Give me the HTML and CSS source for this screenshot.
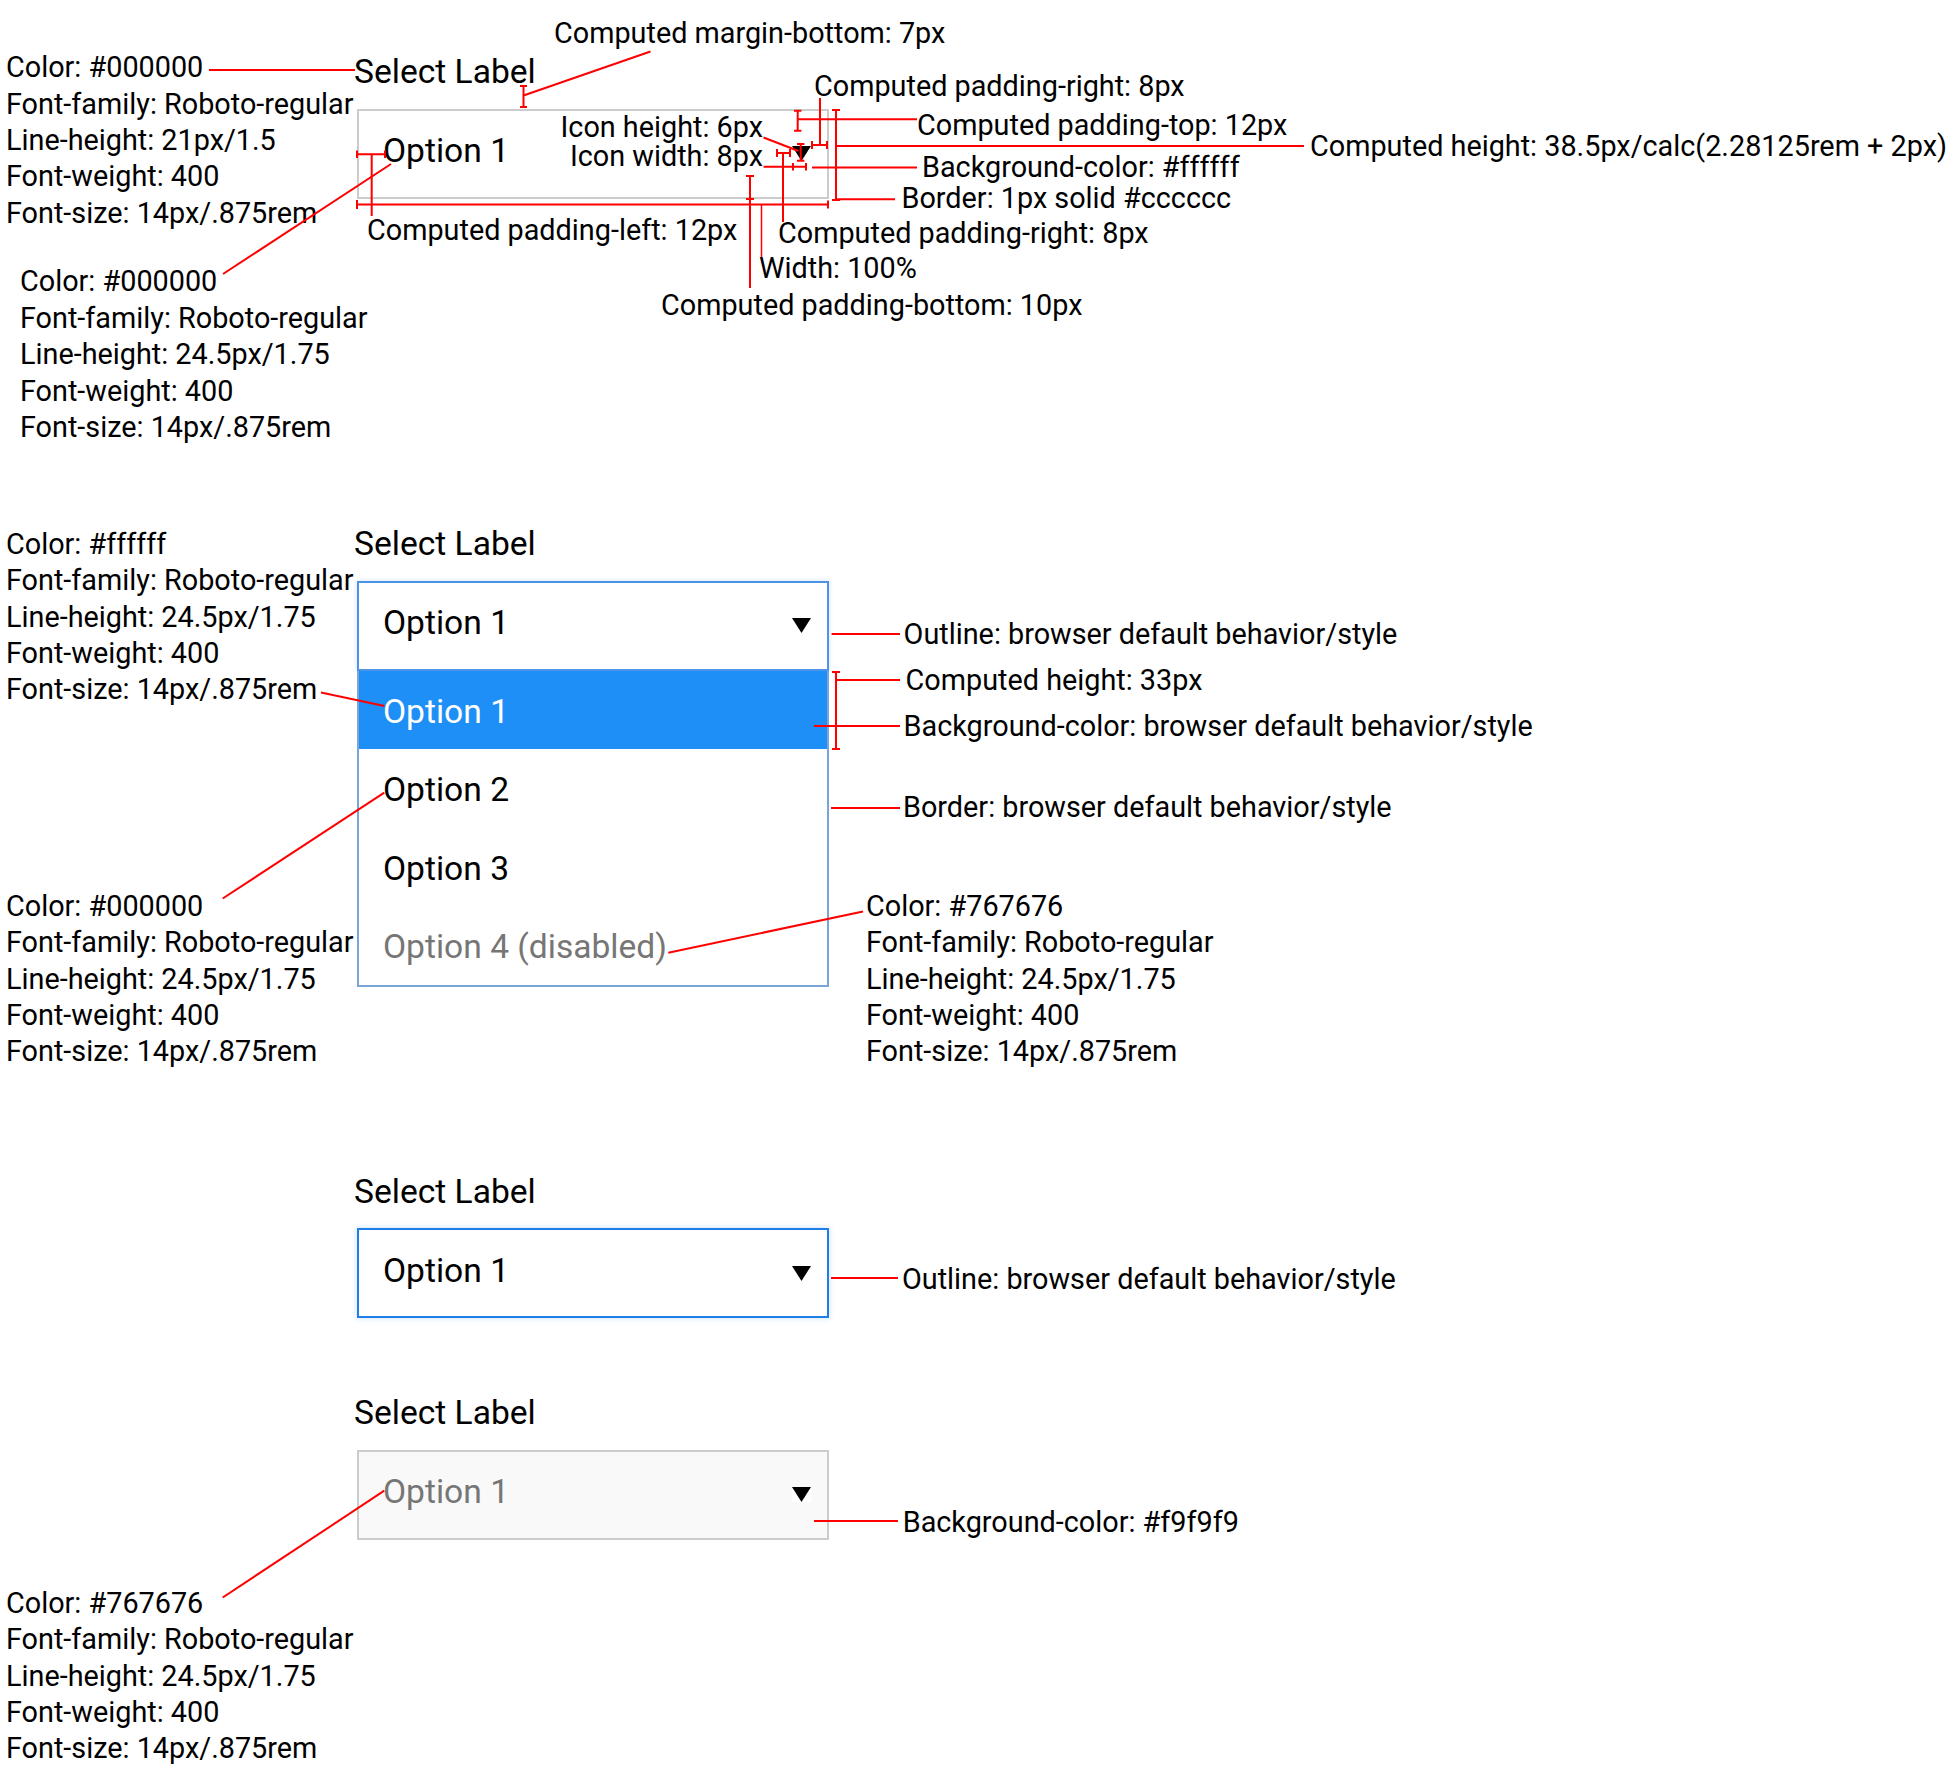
FILE: index.html
```html
<!DOCTYPE html>
<html lang="en">
<head>
<meta charset="utf-8">
<title>Select – redline spec</title>
<link rel="stylesheet" href="styles.css">
</head>
<body>
<div class="page">
  <div class="components">
    <section class="field f1">
      <div class="label">Select Label</div>
      <div class="select s-default"><span class="value">Option 1</span><svg class="caret" viewBox="0 0 19 15"><polygon points="0,0 19,0 9.5,15"/></svg></div>
    </section>
    <section class="field f2">
      <div class="label">Select Label</div>
      <div class="select s-open"><span class="value">Option 1</span><svg class="caret" viewBox="0 0 19 15"><polygon points="0,0 19,0 9.5,15"/></svg></div>
      <ul class="listbox">
        <li class="opt selected">Option 1</li>
        <li class="opt">Option 2</li>
        <li class="opt">Option 3</li>
        <li class="opt disabled">Option 4 (disabled)</li>
      </ul>
    </section>
    <section class="field f3">
      <div class="label">Select Label</div>
      <div class="select s-focus"><span class="value">Option 1</span><svg class="caret" viewBox="0 0 19 15"><polygon points="0,0 19,0 9.5,15"/></svg></div>
    </section>
    <section class="field f4">
      <div class="label">Select Label</div>
      <div class="select s-disabled"><span class="value">Option 1</span><svg class="caret" viewBox="0 0 19 15"><polygon points="0,0 19,0 9.5,15"/></svg></div>
    </section>
  </div>

  <div class="note block n-a">Color: #000000<br>Font-family: Roboto-regular<br>Line-height: 21px/1.5<br>Font-weight: 400<br>Font-size: 14px/.875rem</div>
  <div class="note block n-b">Color: #000000<br>Font-family: Roboto-regular<br>Line-height: 24.5px/1.75<br>Font-weight: 400<br>Font-size: 14px/.875rem</div>
  <div class="note block n-c">Color: #ffffff<br>Font-family: Roboto-regular<br>Line-height: 24.5px/1.75<br>Font-weight: 400<br>Font-size: 14px/.875rem</div>
  <div class="note block n-d">Color: #000000<br>Font-family: Roboto-regular<br>Line-height: 24.5px/1.75<br>Font-weight: 400<br>Font-size: 14px/.875rem</div>
  <div class="note block n-e">Color: #767676<br>Font-family: Roboto-regular<br>Line-height: 24.5px/1.75<br>Font-weight: 400<br>Font-size: 14px/.875rem</div>
  <div class="note block n-f">Color: #767676<br>Font-family: Roboto-regular<br>Line-height: 24.5px/1.75<br>Font-weight: 400<br>Font-size: 14px/.875rem</div>

  <div class="note n-mb">Computed margin-bottom: 7px</div>
  <div class="note n-pr1">Computed padding-right: 8px</div>
  <div class="note n-pt">Computed padding-top: 12px</div>
  <div class="note n-h">Computed height: 38.5px/calc(2.28125rem + 2px)</div>
  <div class="note n-ih">Icon height: 6px</div>
  <div class="note n-iw">Icon width: 8px</div>
  <div class="note n-bg">Background-color: #ffffff</div>
  <div class="note n-bd">Border: 1px solid #cccccc</div>
  <div class="note n-pl">Computed padding-left: 12px</div>
  <div class="note n-pr2">Computed padding-right: 8px</div>
  <div class="note n-w">Width: 100%</div>
  <div class="note n-pb">Computed padding-bottom: 10px</div>

  <div class="note n-o2">Outline: browser default behavior/style</div>
  <div class="note n-h33">Computed height: 33px</div>
  <div class="note n-bg2">Background-color: browser default behavior/style</div>
  <div class="note n-bd2">Border: browser default behavior/style</div>
  <div class="note n-o3">Outline: browser default behavior/style</div>
  <div class="note n-bg4">Background-color: #f9f9f9</div>

  <svg class="redlines" viewBox="0 0 1951 1787" width="1951" height="1787">
    <g class="ln">
      <path d="M209 70H355"/>
      <path d="M523.5 86V107M520 86H527M520 107H527M523.5 95.5L650.5 51.5"/>
      <path d="M357 154.3H385M357 150.5V158M385 150.5V158M371.7 154V216"/>
      <path d="M391 164L223 274"/>
      <path d="M357 204.5H828M357 200V209M828 200.5V208.5"/>
      <path class="thin" d="M761.5 205V257"/>
      <path d="M750 176V288M746 176H754M746 199H754"/>
      <path d="M783 153V222M777 153H790M777 149V157M790 149V157"/>
      <path d="M820 98V145M812 145H827M812 141V149M827 141V149"/>
      <path d="M797.7 110.7V130.7M794 110.7H801.4M794 130.7H801.4M797.7 119.3H917"/>
      <path d="M763.5 137.5L798.5 151M800.7 144V160.7M797 144H804.4M797 160.7H804.4"/>
      <path d="M763.5 166.7H806M793 163V170.4M806 163V170.4"/>
      <path d="M812 167.5H917"/>
      <path d="M836 110V200M832 110H840M832 200H840M836 146H1304"/>
      <path d="M836 199.3H895"/>

      <path d="M321 692.5L384.5 706"/>
      <path d="M222.7 898.5L384.3 792.7"/>
      <path d="M668.3 952.7L863 911.5"/>
      <path d="M831.6 634H900"/>
      <path d="M836 672V749M832 672H840M832 749H840M836 680H900"/>
      <path d="M814 726H900"/>
      <path d="M831 808H900"/>

      <path d="M831 1278H898"/>
      <path d="M814 1521H898"/>
      <path d="M222.7 1597.5L384.3 1490.7"/>
    </g>
  </svg>
</div>
</body>
</html>
```

FILE: styles.css
```css
* { box-sizing: border-box; }

html, body {
  margin: 0;
  padding: 0;
  background: #ffffff;
}

body {
  font-family: Roboto, "Noto Sans", "Liberation Sans", sans-serif;
  color: #000000;
}

.page {
  position: relative;
  width: 1951px;
  height: 1787px;
  overflow: hidden;
}

/* ---------- components (flow) ---------- */
.components {
  display: flex;
  flex-direction: column;
  margin-left: 357px;
  padding-top: 50.4px;
  width: 472px;
}

.field {
  display: flex;
  flex-direction: column;
}

.f2 { margin-top: 323px; }
.f3 { margin-top: 183px; }
.f4 { margin-top: 73px; }

.label {
  font-size: 33.6px;
  line-height: 44px;
  margin: 0 0 14.6px -3px;
}

.select {
  display: flex;
  align-items: center;
  height: 90px;
  padding: 0 16px 0 24px;
  border: 2px solid #cccccc;
  background: #ffffff;
  font-size: 33.6px;
}

.value {
  line-height: 40px;
  margin-bottom: 5.2px;
}

.caret {
  margin-left: auto;
  width: 19px;
  height: 15px;
  background: #ffffff;
  fill: #000000;
  flex: none;
}

.s-open {
  border-color: #4d94e6;
  box-shadow: 0 0 5px rgba(77, 148, 230, 0.25);
}

.s-focus {
  border-color: #1f7fe6;
  box-shadow: 0 0 6px rgba(31, 127, 230, 0.25);
}

.s-disabled {
  background: #f9f9f9;
  color: #767676;
}

.listbox {
  list-style: none;
  margin: 0;
  padding: 0;
  border: 2px solid #7aa5d9;
  border-top: none;
  background: #ffffff;
}

.opt {
  height: 78.5px;
  padding: 21.4px 0 0 24px;
  font-size: 33.6px;
  line-height: 40px;
  color: #000000;
}

.opt.selected {
  background: #1e8ff7;
  color: #ffffff;
}

.opt.disabled {
  color: #767676;
}

/* ---------- annotations (diagram canvas) ---------- */
.note {
  position: absolute;
  font-size: 28.8px;
  line-height: 28px;
  color: #000000;
  white-space: nowrap;
}

.note.block {
  line-height: 36.4px;
}

.n-a { left: 6px; top: 49.2px; }
.n-b { left: 20px; top: 263.4px; }
.n-c { left: 6px; top: 525.7px; }
.n-d { left: 6px; top: 887.7px; }
.n-e { left: 866px; top: 887.7px; }
.n-f { left: 6px; top: 1584.7px; }

.n-mb  { left: 554px; top: 18.9px; }
.n-pr1 { left: 814px; top: 71.9px; }
.n-pt  { left: 917px; top: 111.2px; }
.n-h   { left: 1310px; top: 132.2px; }
.n-ih  { right: 1188px; top: 112.9px; text-align: right; }
.n-iw  { right: 1188px; top: 141.9px; text-align: right; }
.n-bg  { left: 922px; top: 153.2px; }
.n-bd  { left: 901.5px; top: 184.2px; }
.n-pl  { left: 367px; top: 216.2px; }
.n-pr2 { left: 778px; top: 219.2px; }
.n-w   { left: 759px; top: 254.2px; }
.n-pb  { left: 661px; top: 291.2px; }

.n-o2  { left: 903.6px; top: 620.2px; }
.n-h33 { left: 905.6px; top: 666.2px; }
.n-bg2 { left: 903.6px; top: 712.2px; }
.n-bd2 { left: 903px; top: 793.2px; }
.n-o3  { left: 902px; top: 1265.2px; }
.n-bg4 { left: 902.7px; top: 1507.9px; }

.redlines {
  position: absolute;
  left: 0;
  top: 0;
  pointer-events: none;
}

.ln path {
  fill: none;
  stroke: #ff0000;
  stroke-width: 2;
}

.ln path.thin {
  stroke-width: 1.5;
}
```
